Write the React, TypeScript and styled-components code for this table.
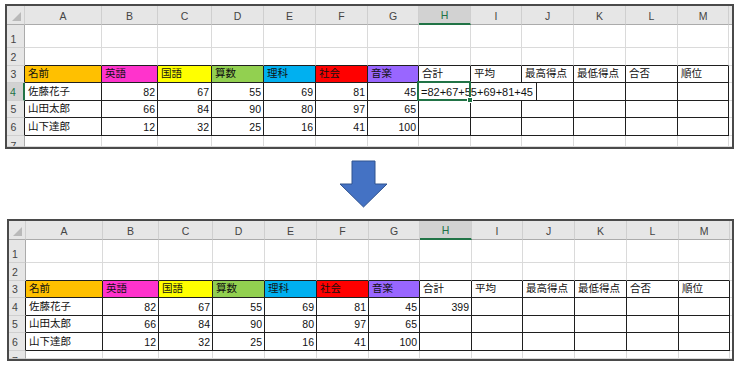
import React from "react";
import styled, { createGlobalStyle } from "styled-components";

const GlobalStyle = createGlobalStyle`
  html, body {
    margin: 0;
    padding: 0;
    background: #ffffff;
  }
  body {
    font-family: "Liberation Sans", "Noto Sans CJK JP", sans-serif;
  }
`;

const COL_WIDTHS = [77, 56, 54, 52, 52, 52, 51, 52, 51, 52, 52, 52, 51];
const LETTERS = "ABCDEFGHIJKLM".split("");
const ROW_HEIGHTS = [19, 23, 18, 17, 18, 17, 18];
const GRID = "#dadada";
const LINE = "#1f1f1f";
const GREEN = "#217346";

type Head = { text: string; bg?: string };

const HEADINGS: Head[] = [
  { text: "名前", bg: "#ffc000" },
  { text: "英語", bg: "#ff33cc" },
  { text: "国語", bg: "#ffff00" },
  { text: "算数", bg: "#92d050" },
  { text: "理科", bg: "#00b0f0" },
  { text: "社会", bg: "#ff0000" },
  { text: "音楽", bg: "#9966ff" },
  { text: "合計" },
  { text: "平均" },
  { text: "最高得点" },
  { text: "最低得点" },
  { text: "合否" },
  { text: "順位" },
];

const STUDENTS: (string | number)[][] = [
  ["佐藤花子", 82, 67, 55, 69, 81, 45],
  ["山田太郎", 66, 84, 90, 80, 97, 65],
  ["山下達郎", 12, 32, 25, 16, 41, 100],
];

const Page = styled.div`
  width: 741px;
  height: 368px;
  display: flex;
  flex-direction: column;
  overflow: hidden;
`;

const Frame = styled.div<{ $left: number; $top: number; $rh: number; $lastRow: number }>`
  margin: ${(p) => p.$top}px 0 0 ${(p) => p.$left}px;
  width: ${(p) => 734 - p.$left}px;
  box-sizing: border-box;
  border: 2px solid #4a4a4a;
  display: grid;
  grid-template-columns: ${(p) => p.$rh}px ${COL_WIDTHS.map((w) => w + "px").join(" ")} 1fr;
  grid-template-rows: ${ROW_HEIGHTS.map((h) => h + "px").join(" ")} ${(p) => p.$lastRow}px;
  overflow: hidden;
  background: #fff;
`;

const Corner = styled.div`
  position: relative;
  background: #e6e6e6;
  border-right: 1px solid #cfcfcf;
  border-bottom: 1px solid #ababab;
  box-sizing: border-box;
  &::after {
    content: "";
    position: absolute;
    right: 3px;
    bottom: 3px;
    border-style: solid;
    border-width: 0 0 9px 9px;
    border-color: transparent transparent #b9b9b9 transparent;
  }
`;

const ColHead = styled.div<{ $active?: boolean }>`
  box-sizing: border-box;
  display: flex;
  align-items: center;
  justify-content: center;
  background: ${(p) => (p.$active ? "#d2d2d2" : "#e6e6e6")};
  color: ${(p) => (p.$active ? GREEN : "#444")};
  border-right: 1px solid #cfcfcf;
  border-bottom: ${(p) => (p.$active ? `2px solid ${GREEN}` : "1px solid #ababab")};
  font-size: 10.5px;
  padding-top: 1px;
`;

const RowHead = styled.div<{ $active?: boolean; $boxed?: boolean; $clipped?: boolean }>`
  box-sizing: border-box;
  display: flex;
  align-items: ${(p) => (p.$clipped ? "flex-start" : "flex-end")};
  justify-content: center;
  padding: ${(p) => (p.$clipped ? "4px 4px 0 0" : "0 4px 2px 0")};
  overflow: hidden;
  background: ${(p) => (p.$active ? "#d2d2d2" : "#e6e6e6")};
  color: ${(p) => (p.$active ? GREEN : "#444")};
  border-bottom: 1px solid #cfcfcf;
  border-right: ${(p) =>
    p.$active ? `2px solid ${GREEN}` : p.$boxed ? `1px solid ${LINE}` : "1px solid #ababab"};
  font-size: 10.5px;
  line-height: 12px;
`;

const Cell = styled.div<{ $bg?: string; $right?: boolean; $bottom?: boolean; $num?: boolean }>`
  position: relative;
  box-sizing: border-box;
  display: flex;
  align-items: flex-end;
  justify-content: ${(p) => (p.$num ? "flex-end" : "flex-start")};
  padding: ${(p) => (p.$num ? "0 2px 2px 0" : "0 0 2px 3px")};
  background: ${(p) => p.$bg ?? "#fff"};
  border-right: 1px solid ${(p) => (p.$right ? LINE : GRID)};
  border-bottom: 1px solid ${(p) => (p.$bottom ? LINE : GRID)};
  color: #111;
  font-size: 10.5px;
  white-space: nowrap;
`;

const EditBox = styled.div`
  position: absolute;
  z-index: 2;
  left: 0;
  top: 0;
  bottom: 0;
  width: 118px;
  box-sizing: border-box;
  display: flex;
  align-items: flex-end;
  padding: 0 0 2px 2px;
  background: #fff;
  border-right: 1px solid ${LINE};
  font-size: 11px;
  color: #111;
`;

const Selection = styled.div`
  position: absolute;
  z-index: 3;
  left: -2px;
  top: -2px;
  right: -1px;
  bottom: -1px;
  border: 2px solid ${GREEN};
  pointer-events: none;
  &::after {
    content: "";
    position: absolute;
    right: -4px;
    bottom: -4px;
    width: 4px;
    height: 4px;
    background: ${GREEN};
    border: 1px solid #fff;
  }
`;

const ArrowRow = styled.div`
  display: flex;
  margin-top: 11px;
  padding-left: 339px;
  height: 48px;
`;

function DownArrow() {
  return (
    <svg width="49" height="48" viewBox="0 0 49 48">
      <polygon
        points="13,1 36,1 36,24 48,24 24.5,47 1,24 13,24"
        fill="#4472c4"
        stroke="#2f528f"
        strokeWidth="1"
      />
    </svg>
  );
}

type SheetProps = {
  left: number;
  top: number;
  rh: number;
  lastRow: number;
  editing?: boolean;
  total?: string;
};

function Sheet({ left, top, rh, lastRow, editing, total }: SheetProps) {
  const rows = [1, 2, 3, 4, 5, 6, 7];
  const cols = Array.from({ length: 14 }, (_, i) => i);

  const content = (r: number, c: number) => {
    if (c > 12) return { text: "" };
    if (r === 3) return { text: HEADINGS[c].text, bg: HEADINGS[c].bg };
    if (r >= 4 && r <= 6) {
      const s = STUDENTS[r - 4];
      if (c <= 6) return { text: String(s[c]), num: c > 0 };
      if (c === 7 && r === 4 && total) return { text: total, num: true };
    }
    return { text: "" };
  };

  return (
    <Frame $left={left} $top={top} $rh={rh} $lastRow={lastRow}>
      <Corner />
      {LETTERS.map((l) => (
        <ColHead key={l} $active={l === "H"}>
          {l}
        </ColHead>
      ))}
      <ColHead />
      {rows.map((r) => (
        <React.Fragment key={r}>
          <RowHead
            $active={editing && r === 4}
            $boxed={r >= 3 && r <= 6}
            $clipped={r === 7}
          >
            {r}
          </RowHead>
          {cols.map((c) => {
            const d = content(r, c);
            const inBox = c <= 12;
            return (
              <Cell
                key={c}
                $bg={d.bg}
                $num={d.num}
                $right={inBox && r >= 3 && r <= 6}
                $bottom={inBox && r >= 2 && r <= 6}
              >
                {d.text}
                {editing && r === 4 && c === 7 && (
                  <>
                    <EditBox>=82+67+55+69+81+45</EditBox>
                    <Selection />
                  </>
                )}
              </Cell>
            );
          })}
        </React.Fragment>
      ))}
    </Frame>
  );
}

export default function App() {
  return (
    <Page>
      <GlobalStyle />
      <Sheet left={5} top={4} rh={18} lastRow={11} editing />
      <ArrowRow>
        <DownArrow />
      </ArrowRow>
      <Sheet left={7} top={11} rh={17} lastRow={8} total="399" />
    </Page>
  );
}
